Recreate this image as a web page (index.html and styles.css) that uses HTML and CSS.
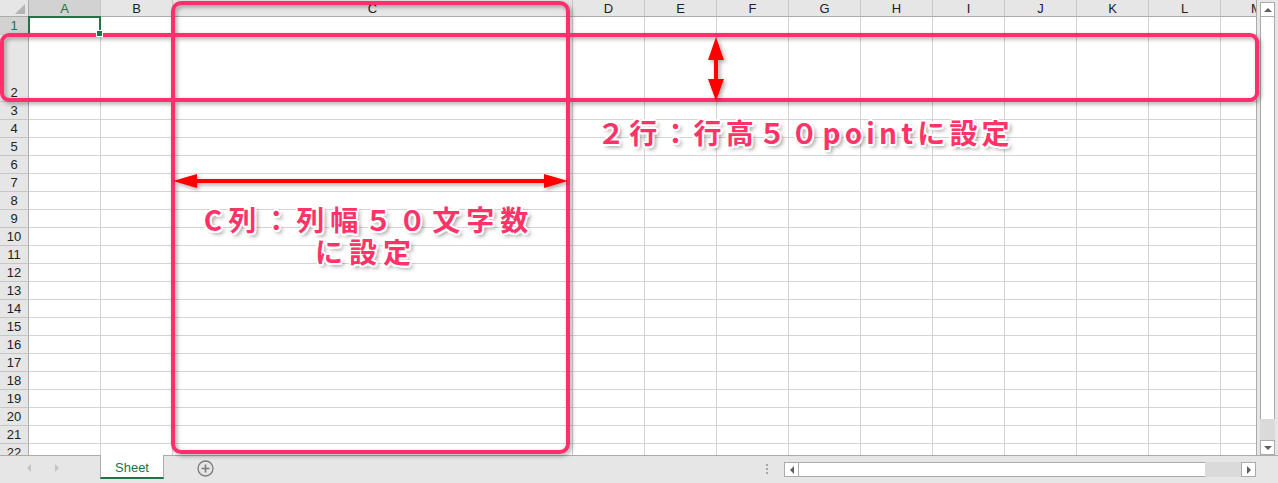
FILE: index.html
```html
<!DOCTYPE html>
<html lang="ja">
<head>
<meta charset="utf-8">
<title>Sheet</title>
<link rel="stylesheet" href="styles.css">
</head>
<body>
<div class="app">
  <div class="main">
    <div class="sheet">
      <div class="hdr">
        <div class="corner"><span class="tri"></span></div>
        <div class="ch sel">A</div><div class="ch">B</div><div class="ch">C</div><div class="ch">D</div><div class="ch">E</div><div class="ch">F</div><div class="ch">G</div><div class="ch">H</div><div class="ch">I</div><div class="ch">J</div><div class="ch">K</div><div class="ch">L</div><div class="ch last">M</div>
      </div>
      <div class="row r1"><div class="rh sel">1</div><div class="c active"><span class="handle"></span></div><div class="c"></div><div class="c"></div><div class="c"></div><div class="c"></div><div class="c"></div><div class="c"></div><div class="c"></div><div class="c"></div><div class="c"></div><div class="c"></div><div class="c"></div><div class="c"></div></div>
      <div class="row r2"><div class="rh">2</div><div class="c"></div><div class="c"></div><div class="c"></div><div class="c"></div><div class="c"></div><div class="c"></div><div class="c"></div><div class="c"></div><div class="c"></div><div class="c"></div><div class="c"></div><div class="c"></div><div class="c"></div></div>
      <div class="row"><div class="rh">3</div><div class="c"></div><div class="c"></div><div class="c"></div><div class="c"></div><div class="c"></div><div class="c"></div><div class="c"></div><div class="c"></div><div class="c"></div><div class="c"></div><div class="c"></div><div class="c"></div><div class="c"></div></div>
      <div class="row"><div class="rh">4</div><div class="c"></div><div class="c"></div><div class="c"></div><div class="c"></div><div class="c"></div><div class="c"></div><div class="c"></div><div class="c"></div><div class="c"></div><div class="c"></div><div class="c"></div><div class="c"></div><div class="c"></div></div>
      <div class="row"><div class="rh">5</div><div class="c"></div><div class="c"></div><div class="c"></div><div class="c"></div><div class="c"></div><div class="c"></div><div class="c"></div><div class="c"></div><div class="c"></div><div class="c"></div><div class="c"></div><div class="c"></div><div class="c"></div></div>
      <div class="row"><div class="rh">6</div><div class="c"></div><div class="c"></div><div class="c"></div><div class="c"></div><div class="c"></div><div class="c"></div><div class="c"></div><div class="c"></div><div class="c"></div><div class="c"></div><div class="c"></div><div class="c"></div><div class="c"></div></div>
      <div class="row"><div class="rh">7</div><div class="c"></div><div class="c"></div><div class="c"></div><div class="c"></div><div class="c"></div><div class="c"></div><div class="c"></div><div class="c"></div><div class="c"></div><div class="c"></div><div class="c"></div><div class="c"></div><div class="c"></div></div>
      <div class="row"><div class="rh">8</div><div class="c"></div><div class="c"></div><div class="c"></div><div class="c"></div><div class="c"></div><div class="c"></div><div class="c"></div><div class="c"></div><div class="c"></div><div class="c"></div><div class="c"></div><div class="c"></div><div class="c"></div></div>
      <div class="row"><div class="rh">9</div><div class="c"></div><div class="c"></div><div class="c"></div><div class="c"></div><div class="c"></div><div class="c"></div><div class="c"></div><div class="c"></div><div class="c"></div><div class="c"></div><div class="c"></div><div class="c"></div><div class="c"></div></div>
      <div class="row"><div class="rh">10</div><div class="c"></div><div class="c"></div><div class="c"></div><div class="c"></div><div class="c"></div><div class="c"></div><div class="c"></div><div class="c"></div><div class="c"></div><div class="c"></div><div class="c"></div><div class="c"></div><div class="c"></div></div>
      <div class="row"><div class="rh">11</div><div class="c"></div><div class="c"></div><div class="c"></div><div class="c"></div><div class="c"></div><div class="c"></div><div class="c"></div><div class="c"></div><div class="c"></div><div class="c"></div><div class="c"></div><div class="c"></div><div class="c"></div></div>
      <div class="row"><div class="rh">12</div><div class="c"></div><div class="c"></div><div class="c"></div><div class="c"></div><div class="c"></div><div class="c"></div><div class="c"></div><div class="c"></div><div class="c"></div><div class="c"></div><div class="c"></div><div class="c"></div><div class="c"></div></div>
      <div class="row"><div class="rh">13</div><div class="c"></div><div class="c"></div><div class="c"></div><div class="c"></div><div class="c"></div><div class="c"></div><div class="c"></div><div class="c"></div><div class="c"></div><div class="c"></div><div class="c"></div><div class="c"></div><div class="c"></div></div>
      <div class="row"><div class="rh">14</div><div class="c"></div><div class="c"></div><div class="c"></div><div class="c"></div><div class="c"></div><div class="c"></div><div class="c"></div><div class="c"></div><div class="c"></div><div class="c"></div><div class="c"></div><div class="c"></div><div class="c"></div></div>
      <div class="row"><div class="rh">15</div><div class="c"></div><div class="c"></div><div class="c"></div><div class="c"></div><div class="c"></div><div class="c"></div><div class="c"></div><div class="c"></div><div class="c"></div><div class="c"></div><div class="c"></div><div class="c"></div><div class="c"></div></div>
      <div class="row"><div class="rh">16</div><div class="c"></div><div class="c"></div><div class="c"></div><div class="c"></div><div class="c"></div><div class="c"></div><div class="c"></div><div class="c"></div><div class="c"></div><div class="c"></div><div class="c"></div><div class="c"></div><div class="c"></div></div>
      <div class="row"><div class="rh">17</div><div class="c"></div><div class="c"></div><div class="c"></div><div class="c"></div><div class="c"></div><div class="c"></div><div class="c"></div><div class="c"></div><div class="c"></div><div class="c"></div><div class="c"></div><div class="c"></div><div class="c"></div></div>
      <div class="row"><div class="rh">18</div><div class="c"></div><div class="c"></div><div class="c"></div><div class="c"></div><div class="c"></div><div class="c"></div><div class="c"></div><div class="c"></div><div class="c"></div><div class="c"></div><div class="c"></div><div class="c"></div><div class="c"></div></div>
      <div class="row"><div class="rh">19</div><div class="c"></div><div class="c"></div><div class="c"></div><div class="c"></div><div class="c"></div><div class="c"></div><div class="c"></div><div class="c"></div><div class="c"></div><div class="c"></div><div class="c"></div><div class="c"></div><div class="c"></div></div>
      <div class="row"><div class="rh">20</div><div class="c"></div><div class="c"></div><div class="c"></div><div class="c"></div><div class="c"></div><div class="c"></div><div class="c"></div><div class="c"></div><div class="c"></div><div class="c"></div><div class="c"></div><div class="c"></div><div class="c"></div></div>
      <div class="row"><div class="rh">21</div><div class="c"></div><div class="c"></div><div class="c"></div><div class="c"></div><div class="c"></div><div class="c"></div><div class="c"></div><div class="c"></div><div class="c"></div><div class="c"></div><div class="c"></div><div class="c"></div><div class="c"></div></div>
      <div class="row"><div class="rh">22</div><div class="c"></div><div class="c"></div><div class="c"></div><div class="c"></div><div class="c"></div><div class="c"></div><div class="c"></div><div class="c"></div><div class="c"></div><div class="c"></div><div class="c"></div><div class="c"></div><div class="c"></div></div>
    </div>
    <div class="vscroll">
      <div class="sbtn up"><span class="tri-up"></span></div>
      <div class="vthumb"></div>
      <div class="vtrack"></div>
      <div class="sbtn down"><span class="tri-down"></span></div>
    </div>
  </div>
  <div class="bottom">
    <div class="nav"><span class="nav-l"></span><span class="nav-r"></span></div>
    <div class="tab">Sheet</div>
    <div class="add">
      <svg width="17" height="17" viewBox="0 0 17 17"><circle cx="8.5" cy="8.5" r="7.5" fill="none" stroke="#7a7a7a" stroke-width="1.3"/><path d="M8.5 4.5v8M4.5 8.5h8" stroke="#7a7a7a" stroke-width="1.6"/></svg>
    </div>
    <div class="spacer"></div>
    <div class="dots"><i></i><i></i><i></i></div>
    <div class="hscroll">
      <div class="sbtn left"><span class="tri-left"></span></div>
      <div class="hthumb"></div>
      <div class="htrack"></div>
      <div class="sbtn right"><span class="tri-right"></span></div>
    </div>
    <div class="corner-gap"></div>
  </div>

  <svg class="overlay" width="1278" height="483" viewBox="0 0 1278 483">
    <defs>
      <filter id="sh" x="-5%" y="-5%" width="110%" height="110%">
        <feDropShadow dx="2" dy="2" stdDeviation="2" flood-color="#000" flood-opacity="0.35"/>
      </filter>
    </defs>
    <g filter="url(#sh)" fill="none" stroke="#ff2f6d" stroke-width="4">
      <rect x="173" y="3" width="395" height="449" rx="8"/>
      <rect x="2" y="35" width="1255" height="65" rx="7"/>
    </g>
    <g filter="url(#sh)" fill="#ff0000">
      <rect x="714" y="56" width="4" height="26"/>
      <polygon points="716,37 708,60 724,60"/>
      <polygon points="716,101 708,79 724,79"/>
      <rect x="195" y="179" width="351" height="4"/>
      <polygon points="173,181 197,174 197,188"/>
      <polygon points="568,181 544,174 544,188"/>
    </g>
  </svg>
  <div class="note note-row">２行：行高５０pointに設定</div>
  <div class="note note-col">C列：列幅５０文字数<br>に設定</div>
</div>
</body>
</html>
```
FILE: styles.css
```css
html, body {
  margin: 0;
  padding: 0;
}
body {
  width: 1278px;
  height: 483px;
  overflow: hidden;
  background: #e6e6e6;
  font-family: "Liberation Sans", Arial, sans-serif;
}
.app {
  position: relative;
  width: 1278px;
  height: 483px;
  display: flex;
  flex-direction: column;
}
.main {
  display: flex;
  height: 456px;
}
.sheet {
  width: 1257px;
  height: 456px;
  box-sizing: border-box;
  border-right: 1px solid #ababab;
  border-bottom: 1px solid #ababab;
  background: #fff;
  overflow: hidden;
}
.hdr, .row {
  display: flex;
}
.hdr {
  height: 17px;
  background: #e6e6e6;
}
.hdr > div {
  box-sizing: border-box;
  height: 17px;
  border-bottom: 1px solid #ababab;
}
.corner {
  width: 29px;
  flex: none;
  position: relative;
  border-right: 1px solid #ababab;
}
.tri {
  position: absolute;
  right: 3px;
  bottom: 2px;
  width: 0;
  height: 0;
  border-left: 10px solid transparent;
  border-bottom: 10px solid #b4b4b4;
}
.ch {
  width: 72px;
  flex: none;
  border-right: 1px solid #c6c6c6;
  font-size: 13px;
  line-height: 17px;
  text-align: center;
  color: #222;
  overflow: hidden;
}
.hdr > .ch:nth-child(4), .row > .c:nth-child(4) {
  width: 400px;
}
.ch.last {
  flex: 1;
  border-right: none;
  text-align: left;
  padding-left: 30px;
}
.ch.sel {
  background: #d2d2d2;
  color: #217346;
}
.row {
  height: 18px;
}
.row.r2 {
  height: 67px;
}
.row > div {
  box-sizing: border-box;
  height: 100%;
}
.rh {
  width: 29px;
  flex: none;
  background: #e6e6e6;
  border-right: 1px solid #ababab;
  border-bottom: 1px solid #c6c6c6;
  font-size: 13px;
  line-height: 15px;
  color: #222;
  display: flex;
  align-items: flex-end;
  justify-content: center;
  padding-bottom: 1px;
}
.rh.sel {
  background: #d2d2d2;
  color: #217346;
}
.c {
  width: 72px;
  flex: none;
  border-right: 1px solid #d4d4d4;
  border-bottom: 1px solid #d4d4d4;
}
.c:last-child {
  flex: 1;
  border-right: none;
}
.c.active {
  position: relative;
}
.c.active::before {
  content: "";
  position: absolute;
  left: -1px;
  top: -1px;
  right: -1px;
  bottom: -1px;
  border: 2px solid #217346;
}
.handle {
  position: absolute;
  right: -3px;
  bottom: -3px;
  width: 5px;
  height: 5px;
  background: #217346;
  border: 1px solid #fff;
  z-index: 1;
}
.vscroll {
  width: 21px;
  height: 456px;
  box-sizing: border-box;
  padding: 2px 3px 0 3px;
  display: flex;
  flex-direction: column;
  border-bottom: 1px solid #ababab;
}
.sbtn {
  box-sizing: border-box;
  background: #fff;
  border: 1px solid #ababab;
  display: flex;
  align-items: center;
  justify-content: center;
  flex: none;
}
.vscroll .sbtn {
  width: 15px;
  height: 15px;
}
.vthumb {
  box-sizing: border-box;
  height: 402px;
  background: #fff;
  border: 1px solid #ababab;
  border-top: none;
  border-bottom: none;
  flex: none;
}
.vtrack {
  flex: 1;
  background: #dadada;
}
.tri-up {
  width: 0;
  height: 0;
  border-left: 4px solid transparent;
  border-right: 4px solid transparent;
  border-bottom: 4px solid #606060;
}
.tri-down {
  width: 0;
  height: 0;
  border-left: 4px solid transparent;
  border-right: 4px solid transparent;
  border-top: 4px solid #606060;
}
.bottom {
  height: 27px;
  display: flex;
  align-items: flex-start;
}
.nav {
  width: 100px;
  height: 24px;
  display: flex;
  align-items: center;
  flex: none;
}
.nav-l {
  margin-left: 27px;
  width: 0;
  height: 0;
  border-top: 4px solid transparent;
  border-bottom: 4px solid transparent;
  border-right: 4px solid #c4c4c4;
}
.nav-r {
  margin-left: 24px;
  width: 0;
  height: 0;
  border-top: 4px solid transparent;
  border-bottom: 4px solid transparent;
  border-left: 4px solid #c4c4c4;
}
.tab {
  width: 64px;
  height: 24px;
  box-sizing: border-box;
  margin-top: -1px;
  padding-top: 2px;
  background: #fff;
  border-left: 1px solid #ababab;
  border-right: 1px solid #ababab;
  border-bottom: 2px solid #217346;
  color: #217346;
  font-size: 13px;
  line-height: 22px;
  text-align: center;
  flex: none;
}
.add {
  margin-left: 33px;
  margin-top: 4px;
  width: 17px;
  height: 17px;
  flex: none;
}
.add svg {
  display: block;
}
.spacer {
  flex: 1;
}
.dots {
  width: 3px;
  margin-top: 8px;
  margin-right: 15px;
  display: flex;
  flex-direction: column;
  gap: 2px;
  flex: none;
}
.dots i {
  display: block;
  width: 2px;
  height: 2px;
  background: #a6a6a6;
}
.hscroll {
  width: 472px;
  height: 15px;
  margin-top: 6px;
  display: flex;
  flex: none;
}
.hscroll .sbtn {
  width: 15px;
  height: 15px;
}
.hthumb {
  width: 406px;
  box-sizing: border-box;
  height: 15px;
  background: #fff;
  border-top: 1px solid #ababab;
  border-bottom: 1px solid #ababab;
  flex: none;
}
.htrack {
  flex: 1;
  background: #dadada;
}
.tri-left {
  width: 0;
  height: 0;
  border-top: 4px solid transparent;
  border-bottom: 4px solid transparent;
  border-right: 4px solid #606060;
}
.tri-right {
  width: 0;
  height: 0;
  border-top: 4px solid transparent;
  border-bottom: 4px solid transparent;
  border-left: 4px solid #606060;
}
.corner-gap {
  width: 22px;
  flex: none;
}
.overlay {
  position: absolute;
  left: 0;
  top: 0;
  pointer-events: none;
}
.note {
  position: absolute;
  font-family: "Noto Sans CJK JP", sans-serif;
  font-weight: 700;
  font-size: 28px;
  line-height: 32px;
  color: #ff3368;
  white-space: nowrap;
  text-shadow:
    2px 0 0 #fff, -2px 0 0 #fff, 0 2px 0 #fff, 0 -2px 0 #fff,
    1.5px 1.5px 0 #fff, -1.5px 1.5px 0 #fff, 1.5px -1.5px 0 #fff, -1.5px -1.5px 0 #fff,
    3px 3px 4px rgba(0, 0, 0, 0.45);
}
.note-row {
  left: 597px;
  top: 116px;
  letter-spacing: 4.2px;
}
.note-col {
  left: 196px;
  top: 203px;
  width: 340px;
  text-align: center;
  letter-spacing: 6px;
  text-indent: 6px;
}
```
